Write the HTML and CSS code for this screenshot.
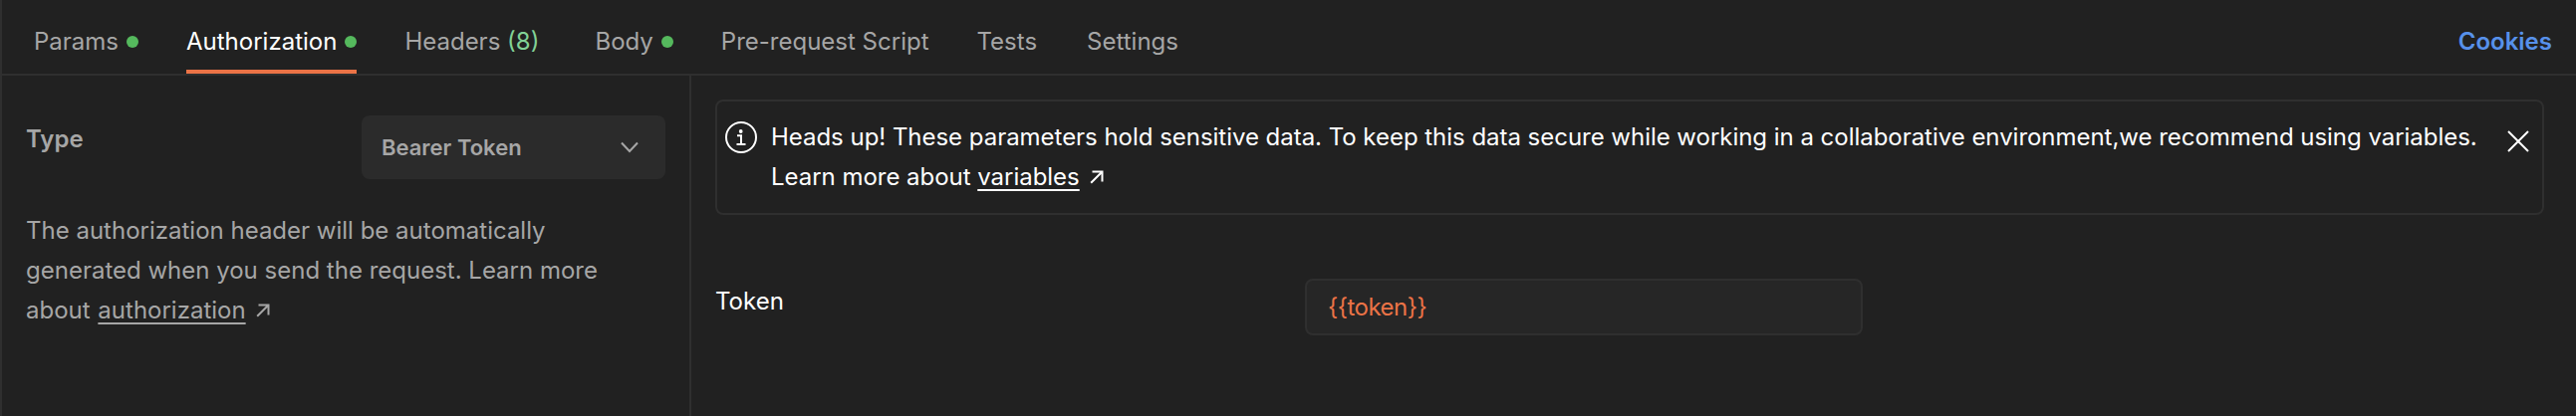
FILE: index.html
```html
<!DOCTYPE html>
<html lang="en">
<head>
<meta charset="utf-8">
<title>Authorization</title>
<link rel="stylesheet" href="styles.css">
</head>
<body>
<div class="pane">
  <nav class="tabs">
    <a class="tab params">Params<i class="dot"></i></a>
    <a class="tab active">Authorization<i class="dot"></i></a>
    <a class="tab headers">Headers <span class="count">(8)</span></a>
    <a class="tab body-tab">Body<i class="dot"></i></a>
    <a class="tab script">Pre-request Script</a>
    <a class="tab tests">Tests</a>
    <a class="tab settings">Settings</a>
    <a class="cookies">Cookies</a>
  </nav>
  <div class="content">
    <aside class="side">
      <div class="type-row">
        <span class="type-label">Type</span>
        <div class="select"><span>Bearer Token</span>
          <svg class="chevron" width="18" height="12" viewBox="0 0 18 12"><path d="M1 1.5 9 10 17 1.5"/></svg>
        </div>
      </div>
      <p class="help">The authorization header will be automatically<br>generated when you send the request. Learn more<br>about <a class="link">authorization</a><svg class="arrow" width="14" height="14" viewBox="0 0 14 14"><path d="M2.5 1.5H12.5V11.5M12.5 1.5 1.2 12.8"/></svg></p>
    </aside>
    <main class="main">
      <div class="alert">
        <svg class="info" width="32" height="32" viewBox="0 0 32 32"><circle cx="16" cy="16" r="15"/><path d="M12 14.2H16V23M11.5 23H20.5"/><circle class="pip" cx="15.7" cy="10" r="1.9"/></svg>
        <p class="message">Heads up! These parameters hold sensitive data. To keep this data secure while working in a collaborative environment,we recommend using variables.<br>Learn more about <a class="link">variables</a><svg class="arrow" width="14" height="14" viewBox="0 0 14 14"><path d="M2.5 1.5H12.5V11.5M12.5 1.5 1.2 12.8"/></svg></p>
        <svg class="close" width="22" height="22" viewBox="0 0 22 22"><path d="M1 1 21 21M21 1 1 21"/></svg>
      </div>
      <div class="field">
        <label class="field-label">Token</label>
        <div class="input">{{token}}</div>
      </div>
    </main>
  </div>
</div>
</body>
</html>
```
FILE: styles.css
```css
* { box-sizing: border-box; }
body {
  margin: 0;
  background: #212121;
  color: #a6a6a6;
  font: 24px/40px Inter, sans-serif;
}
svg { fill: none; stroke: currentColor; stroke-width: 2; flex: none; }
.pane {
  height: 418px;
  display: flex;
  flex-direction: column;
  border-left: 2px solid #2f2f2f;
  overflow: hidden;
}
.tabs {
  height: 76px;
  flex: none;
  display: flex;
  border-bottom: 2px solid #2f2f2f;
  padding: 0 24px 0 32px;
  white-space: nowrap;
}
.tab {
  height: 74px;
  padding-top: 22px;
  margin-right: 48px;
  display: flex;
  white-space: pre;
}
.headers { margin-right: 56px; }
.tests { margin-right: 50px; }
.dot {
  width: 12px;
  height: 12px;
  margin: 14px 0 0 8px;
  border-radius: 50%;
  background: #55b95d;
}
.active { color: #fff; border-bottom: 4px solid #eb7346; }
.count { color: #82d196; }
.cookies {
  margin-left: auto;
  padding-top: 22px;
  color: #5791eb;
  font-weight: 600;
}
.content { flex: 1; display: flex; }
.side {
  width: 692px;
  border-right: 2px solid #2f2f2f;
  padding: 40px 24px 0;
}
.type-row { display: flex; justify-content: space-between; }
.type-label { font-weight: 600; padding-top: 4px; }
.select {
  width: 305px;
  height: 64px;
  display: flex;
  align-items: center;
  justify-content: space-between;
  padding: 0 27px 0 20px;
  border-radius: 8px;
  background: #2b2b2b;
  font-size: 22px;
  font-weight: 600;
}
.help { margin: 32px 0 0; white-space: nowrap; }
.link {
  text-decoration: underline;
  text-decoration-thickness: 2px;
  text-decoration-skip-ink: none;
  text-underline-offset: 4px;
}
.help .link { margin-left: 1px; }
.arrow { margin-left: 10px; vertical-align: 1px; }
.main { flex: 1; padding: 24px 32px 0 24px; }
.alert {
  height: 116px;
  display: flex;
  padding: 16px 13px 0 8px;
  border: 2px solid #2f2f2f;
  border-radius: 8px;
  color: #fff;
}
.info { margin-top: 4px; }
.pip { fill: currentColor; stroke: none; }
.message { margin: 0 0 0 14px; white-space: nowrap; letter-spacing: -0.03px; }
.close { margin: 13px 0 0 auto; }
.field { display: flex; margin-top: 64px; color: #fff; }
.field-label { width: 592px; padding-top: 3px; }
.input {
  width: 560px;
  height: 57px;
  padding: 7px 21px;
  border: 2px solid #2f2f2f;
  border-radius: 8px;
  background: #262626;
  color: #eb7346;
  letter-spacing: -0.5px;
}
```
